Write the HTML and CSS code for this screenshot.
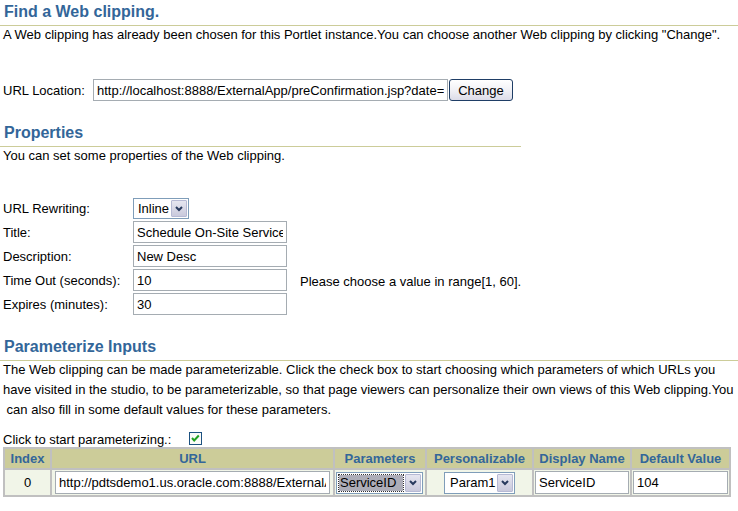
FILE: index.html
```html
<!DOCTYPE html>
<html lang="en">
<head>
<meta charset="utf-8">
<title>Web clipping</title>
<link rel="stylesheet" href="styles.css">
</head>
<body>
<section class="sec">
  <h2 class="hdr">Find a Web clipping.</h2>
  <p class="desc">A Web clipping has already been chosen for this Portlet instance.You can choose another Web clipping by clicking "Change".</p>
  <div class="url-row">
    <span class="lbl">URL Location:</span>
    <input class="txt url" type="text" value="http://localhost:8888/ExternalApp/preConfirmation.jsp?date=">
    <button class="btn" type="button">Change</button>
  </div>
</section>

<section class="sec props">
  <h2 class="hdr next">Properties</h2>
  <p class="desc">You can set some properties of the Web clipping.</p>
  <div class="form">
    <span class="lbl">URL Rewriting:</span>
    <div class="sel sel-rw"><span class="val">Inline</span><span class="arr"><svg width="8" height="6" viewBox="0 0 8 6"><polyline points="1,1 4,4 7,1" fill="none" stroke="#283a5e" stroke-width="2"/></svg></span></div>
    <span class="lbl">Title:</span>
    <input class="txt fld" type="text" value="Schedule On-Site Services">
    <span class="lbl">Description:</span>
    <input class="txt fld" type="text" value="New Desc">
    <span class="lbl">Time Out (seconds):</span>
    <input class="txt fld" type="text" value="10">
    <span class="msg">Please choose a value in range[1, 60].</span>
    <span class="lbl">Expires (minutes):</span>
    <input class="txt fld" type="text" value="30">
  </div>
</section>

<section class="sec">
  <h2 class="hdr next">Parameterize Inputs</h2>
  <p class="desc multi">The Web clipping can be made parameterizable. Click the check box to start choosing which parameters of which URLs you<br>have visited in the studio, to be parameterizable, so that page viewers can personalize their own views of this Web clipping.You<br>&nbsp;can also fill in some default values for these parameters.</p>
  <div class="chk-row">Click to start parameterizing.:<span class="chk"><svg width="13" height="13" viewBox="0 0 13 13"><rect x="0.5" y="0.5" width="12" height="12" fill="#fbfbf8" stroke="#1c5180"/><polyline points="3,6 5.2,8.5 9.8,3.5" fill="none" stroke="#21a121" stroke-width="2"/></svg></span></div>
  <table class="params">
    <thead>
      <tr>
        <th class="c-idx">Index</th>
        <th class="c-url">URL</th>
        <th class="c-par">Parameters</th>
        <th class="c-per">Personalizable</th>
        <th class="c-dn">Display Name</th>
        <th class="c-dv">Default Value</th>
      </tr>
    </thead>
    <tbody>
      <tr>
        <td>0</td>
        <td><input class="txt in-url" type="text" value="http://pdtsdemo1.us.oracle.com:8888/ExternalApp/preConfirmation.jsp"></td>
        <td class="left"><div class="sel sel-par"><span class="val hl">ServiceID</span><span class="arr"><svg width="8" height="6" viewBox="0 0 8 6"><polyline points="1,1 4,4 7,1" fill="none" stroke="#283a5e" stroke-width="2"/></svg></span></div></td>
        <td><div class="sel sel-per"><span class="val">Param1</span><span class="arr"><svg width="8" height="6" viewBox="0 0 8 6"><polyline points="1,1 4,4 7,1" fill="none" stroke="#283a5e" stroke-width="2"/></svg></span></div></td>
        <td><input class="txt in-dn" type="text" value="ServiceID"></td>
        <td><input class="txt in-dv" type="text" value="104"></td>
      </tr>
    </tbody>
  </table>
</section>
</body>
</html>
```

FILE: styles.css
```css
* { box-sizing: border-box; }

body {
  margin: 0;
  font-family: "Liberation Sans", Arial, sans-serif;
  font-size: 13px;
  color: #000;
  background: #fff;
}

.hdr {
  margin: 0;
  padding: 2px 0 3px 4px;
  font-size: 16px;
  font-weight: bold;
  line-height: 20px;
  color: #336699;
  border-bottom: 1px solid #cccc99;
}

.hdr.next {
  padding-top: 0;
  margin-top: 22px;
}

.props { width: 521px; }

.desc {
  margin: 0;
  padding-left: 3px;
  line-height: 18px;
}

.desc.multi {
  line-height: 20px;
  margin-top: -1px;
  white-space: nowrap;
}

.url-row {
  display: flex;
  align-items: center;
  height: 22px;
  margin-top: 35px;
  padding-left: 3px;
}

.url-row .lbl { width: 90px; }

.txt {
  -webkit-appearance: none;
  appearance: none;
  height: 22px;
  margin: 0;
  padding: 0 3px;
  border: 1px solid #a5acb2;
  border-radius: 0;
  background: #fff;
  font: 13px "Liberation Sans", Arial, sans-serif;
  color: #000;
  outline: none;
}

.url { width: 355px; }

.btn {
  width: 64px;
  height: 22px;
  margin-left: 1px;
  padding: 0;
  border: 1px solid #1f3e66;
  border-radius: 3px;
  background: linear-gradient(#ffffff, #f3f3f7 45%, #dcdce8);
  font: 13px "Liberation Sans", Arial, sans-serif;
  color: #000;
}

.form {
  display: grid;
  grid-template-columns: 130px 154px auto;
  grid-template-rows: 21px 22px 22px 22px 22px;
  row-gap: 2px;
  align-items: center;
  margin-top: 33px;
  padding-left: 3px;
}

.form .lbl { grid-column: 1; }

.fld { width: 154px; }

.msg {
  padding-left: 13px;
  padding-top: 2px;
  white-space: nowrap;
}

.sel {
  display: inline-flex;
  align-items: stretch;
  padding: 1px;
  border: 1px solid #7f9db9;
  background: #fff;
  vertical-align: middle;
  text-align: left;
}

.sel .val {
  flex: 1;
  display: flex;
  align-items: center;
  padding-left: 3px;
  white-space: nowrap;
  overflow: hidden;
}

.sel .arr {
  width: 16px;
  flex: none;
  display: flex;
  align-items: center;
  justify-content: center;
  border: 1px solid #b6b9d4;
  border-radius: 1px;
  background: linear-gradient(#e6e6f0, #c9c9dc);
}

.sel-rw { width: 56px; height: 21px; }

.sel-par { width: 87px; height: 22px; }
.sel-par .val { margin: 1px 2px 1px 1px; padding-left: 1px; }
.hl {
  background: #adadb8;
  outline: 1px dotted #333;
}

.sel-per { width: 71px; height: 22px; }
.sel-per .val { padding-left: 4px; }

.chk-row {
  height: 17px;
  margin-top: 10px;
  padding-left: 3px;
  line-height: 20px;
}

.chk {
  display: inline-block;
  width: 13px;
  height: 13px;
  margin-left: 18px;
  vertical-align: -1px;
}

.chk svg { display: block; }

.params {
  width: 728px;
  margin-left: 3px;
  table-layout: fixed;
  border-collapse: separate;
  border-spacing: 2px;
  background: #c0c0c0;
}

.params th {
  height: 19px;
  padding: 0;
  line-height: 19px;
  background: #cccc99;
  color: #336699;
  font-weight: bold;
  font-size: 13px;
  text-align: center;
  white-space: nowrap;
}

.params td {
  height: 25px;
  padding: 0;
  background: #f1f5e8;
  text-align: center;
  vertical-align: middle;
}

.params td.left {
  text-align: left;
  padding-left: 1px;
}

.c-idx { width: 45px; }
.c-url { width: 281px; }
.c-par { width: 90px; }
.c-per { width: 105px; }
.c-dn { width: 96px; }
.c-dv { width: 97px; }

.params .txt { height: 23px; vertical-align: middle; }
.in-url { width: 275px; }
.in-dn { width: 94px; }
.in-dv { width: 95px; }
```
